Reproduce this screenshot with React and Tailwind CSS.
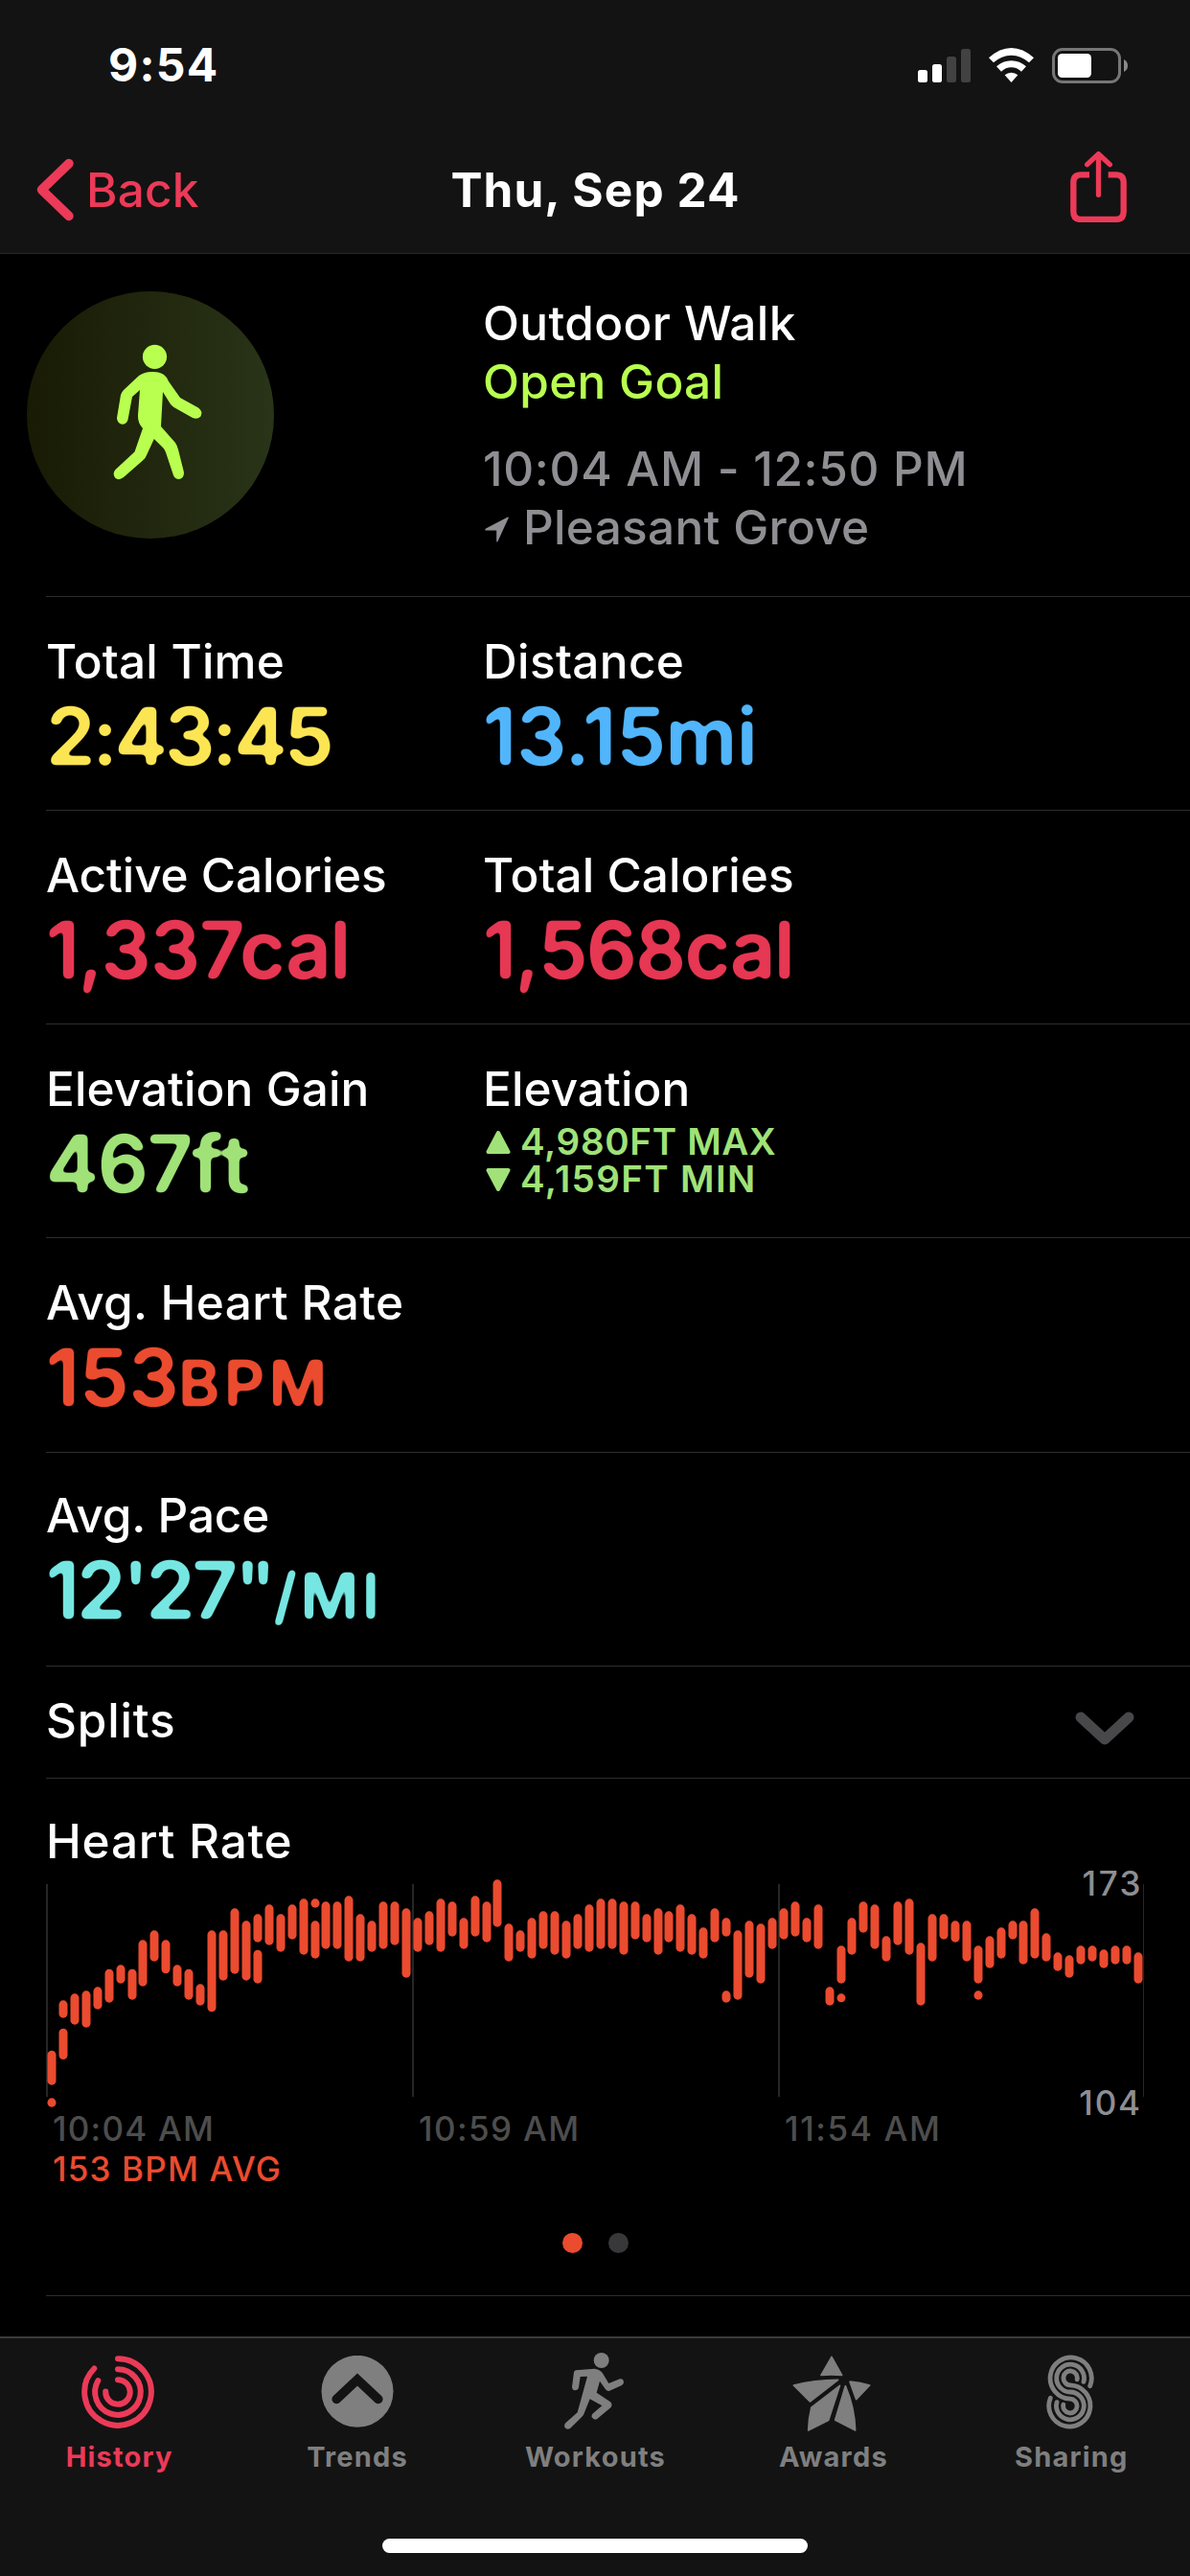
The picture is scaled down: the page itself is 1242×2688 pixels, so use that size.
import React from "react";

// Heart-rate ranges: [top, bottom] pairs on a 720-unit vertical scale, one entry per time slot.
const HEART_RATE = [
  [[539, 647], [688, 716]], [[382, 437], [470, 567]], [[361, 458]], [[352, 467]], [[340, 410]],
  [[284, 389]], [[271, 329]], [[284, 380]], [[193, 338]], [[163, 260]], [[193, 298]], [[271, 338]],
  [[284, 380]], [[331, 398]], [[163, 418]], [[163, 320]], [[94, 299]], [[133, 320]],
  [[112, 200], [224, 329]], [[82, 209]], [[112, 230]], [[82, 191]], [[64, 239]], [[64, 92], [133, 251]],
  [[73, 221]], [[73, 221]], [[55, 260]], [[112, 260]], [[133, 230]], [[73, 221]], [[73, 209]],
  [[94, 311]], [[124, 230]], [[103, 209]], [[64, 230]], [[73, 182]], [[124, 221]], [[55, 182]],
  [[73, 200]], [[4, 152]], [[142, 260]], [[163, 230]], [[124, 251]], [[103, 221]], [[103, 239]],
  [[133, 251]], [[112, 221]], [[82, 230]], [[64, 221]], [[64, 221]], [[73, 239]], [[73, 191]],
  [[112, 200]], [[94, 239]], [[103, 200]], [[82, 230]], [[112, 239]], [[154, 251]], [[94, 200]],
  [[124, 182], [352, 389]], [[163, 380]], [[133, 311]], [[142, 329]], [[124, 221]], [[94, 191]],
  [[73, 182]], [[124, 200]], [[82, 221]], [[340, 398]], [[211, 329], [361, 388]], [[124, 239]],
  [[73, 170]], [[82, 221]], [[181, 260]], [[73, 209]], [[64, 239]], [[202, 398]], [[112, 260]],
  [[112, 191]], [[133, 200]], [[133, 260]], [[211, 329], [352, 380]], [[181, 281]], [[154, 251]],
  [[133, 191]], [[133, 269]], [[94, 251]], [[172, 260]], [[232, 290]], [[241, 311]], [[211, 269]],
  [[211, 260]], [[223, 281]], [[211, 269]], [[211, 269]], [[232, 329]],
];

function RoundedFilter() {
  return (
    <svg width="0" height="0" className="absolute" aria-hidden="true">
      <filter id="rounded" x="-5%" y="-5%" width="110%" height="110%" colorInterpolationFilters="sRGB">
        <feGaussianBlur stdDeviation="2.6" />
        <feComponentTransfer>
          <feFuncA type="linear" slope="6" intercept="-2.2" />
        </feComponentTransfer>
      </filter>
    </svg>
  );
}

function StatusBar() {
  return (
    <div className="flex items-center justify-between pt-[38px] pl-[113px] pr-[65px]">
      <span className="text-[48px] font-bold leading-[60px] tracking-[1.3px]">9:54</span>
      <div className="flex items-center">
        <svg width="55" height="35" viewBox="0 0 55 35" className="mr-[19px]">
          <rect x="0" y="22" width="10" height="13" rx="2.5" fill="#fff" />
          <rect x="15" y="16" width="10" height="19" rx="2.5" fill="#fff" />
          <rect x="30" y="8" width="10" height="27" rx="2.5" fill="#424242" />
          <rect x="45" y="0" width="10" height="35" rx="2.5" fill="#424242" />
        </svg>
        <svg width="47" height="36" viewBox="276 57 141 108" fill="#fff" className="mr-[19px]">
          <path d="M276 88Q310 57 346.500 57Q383 57 417 88L402 103Q377 80 346.500 80Q316 80 291 103Z" />
          <path d="M300 115Q320 97 346.500 97Q373 97 393 115L378 131Q364 118 346.500 118Q329 118 315 131Z" />
          <path d="M326 142Q335 134 346.500 134Q358 134 367 142L346.500 165Z" />
        </svg>
        <svg width="79" height="37" viewBox="0 0 79 37">
          <rect x="1.500" y="1.500" width="69" height="34" rx="9.500" fill="none" stroke="#767676" strokeWidth="3" />
          <rect x="6" y="6" width="35" height="25" rx="4.500" fill="#fff" />
          <path d="M75 12Q79 14 79 18.500Q79 23 75 25Z" fill="#8a8a8a" />
        </svg>
      </div>
    </div>
  );
}

function NavBar() {
  return (
    <div className="grid h-[132px] mt-[34px] grid-cols-3 items-center pl-[38px] pr-[66px]">
      <div className="flex items-center text-[#ec3a58]">
        <svg width="40" height="66" viewBox="0 0 40 66" fill="none" stroke="currentColor" strokeWidth="9.500" strokeLinecap="round" strokeLinejoin="round">
          <path d="M34 5.500L5.500 33L34 60.500" />
        </svg>
        <span className="ml-[12px] text-[49.5px] font-[450] leading-[60px] tracking-[0.2px]">Back</span>
      </div>
      <h1 className="ml-[29px] whitespace-nowrap text-center text-[49.5px] font-bold leading-[60px] tracking-[1.1px]">Thu, Sep 24</h1>
      <svg width="59" height="74" viewBox="531 384 177 222" fill="none" stroke="#ec3a58" strokeLinecap="round" className="mb-[6px] justify-self-end">
        <path d="M591 457H565Q541 457 541 481V573Q541 597 565 597H674Q698 597 698 573V481Q698 457 674 457H650" strokeWidth="19" strokeLinecap="butt" />
        <path d="M619.500 394V520M584 425L619.500 392L655 425" strokeWidth="16" strokeLinejoin="round" />
      </svg>
    </div>
  );
}

function WalkBadge() {
  return (
    <div className="ml-[28px] mt-[39px] h-[258px] w-[258px] shrink-0 rounded-full bg-linear-to-r from-[#191b05] to-[#293418]">
      <svg width="258" height="258" viewBox="0 0 258 258" fill="#b8ff4f">
        <circle cx="133.500" cy="68.300" r="12.600" />
        <path d="M130 84Q138 83.500 143 87Q146 89 148 94L160 111L179 121.500Q184 125 181.500 130.500Q178 134 173 132L153.500 121Q151 119.500 149.500 117L142 105L140 141L155 158Q157 161 158 165L164 189Q164 195 159 196Q154.500 196 153 192L145 168Q144 165 142 163L132.800 154L125 171Q124 174 121 176.500L101 194Q96 198 92 194.500Q89 190 92.500 186L112.500 167.500L121 143Q115.500 137 116 129L118 103L110 110L105.500 134Q104 139 99 138.700Q94 137 94 132L98 108Q99 105 101 103L117 88Q123 84 130 84Z" />
      </svg>
    </div>
  );
}

function WorkoutSummary() {
  return (
    <section className="flex h-[357px]">
      <WalkBadge />
      <div className="ml-[218px] pt-[42px] text-[49.5px] font-medium leading-[61px]">
        <p className="tracking-[0.39px]">Outdoor Walk</p>
        <p className="tracking-[0.3px] text-[#b8ff4f]">Open Goal</p>
        <p className="mt-[30px] tracking-[0.68px] text-[#8e8e93]">10:04 AM - 12:50 PM</p>
        <p className="flex items-center tracking-[0.3px] text-[#8e8e93]">
          <svg width="25" height="27" viewBox="0 0 25 27" fill="currentColor" className="ml-[2px] mr-[15px] mt-[4px]">
            <path d="M24 .500Q25 0 24.700 1.500L13.500 26Q12.500 27.500 12.200 25.500V14.500H1Q-.500 14 1 12.500Z" />
          </svg>
          Pleasant Grove
        </p>
      </div>
    </section>
  );
}

function Stat({ label, labelClass, children }) {
  return (
    <div className="w-[456px]">
      <p className={`text-[49.5px] font-[530] leading-[60px] whitespace-nowrap ${labelClass}`}>{label}</p>
      {children}
    </div>
  );
}

function Value({ className, children }) {
  return (
    <p className={`-ml-[10px] mt-[3px] w-[440px] whitespace-nowrap pl-[10px] text-[82.5px] font-semibold leading-[90px] [filter:url(#rounded)] ${className}`}>
      {children}
    </p>
  );
}

function StatRow({ className = "h-[223px] pt-[37px]", children }) {
  return <section className={`ml-[48px] flex border-b border-[#2d2d2f] ${className}`}>{children}</section>;
}

function HeartRateChart() {
  return (
    <section className="ml-[48px] h-[540px] border-b border-[#2d2d2f] pt-[35px]">
      <h2 className="text-[49.5px] font-[530] leading-[60px] tracking-[0.75px]">Heart Rate</h2>
      <div className="relative mt-[9px] w-[1146px]">
        <svg width="1146" height="240" viewBox="0 0 1146 240" className="block">
          <g fill="#262626">
            <rect x="0" y="6" width="2" height="222" />
            <rect x="382" y="6" width="2" height="222" />
            <rect x="764" y="6" width="2" height="222" />
            <rect x="1145" y="6" width="1" height="222" />
          </g>
          <g fill="#eb4b2f">
            {HEART_RATE.map((ranges, i) =>
              ranges.map(([top, bottom]) => (
                <rect key={`${i}-${top}`} x={1.5 + Math.round(i * 11.935)} y={top / 3} width="9" height={(bottom - top) / 3} rx="4.5" />
              ))
            )}
          </g>
        </svg>
        <span className="absolute -top-[16px] right-[1px] text-[35px] font-medium leading-[42px] tracking-[2.5px] text-[#8e8e93]">173</span>
        <span className="absolute top-[213px] right-[2px] text-[35px] font-medium leading-[42px] tracking-[1.9px] text-[#8e8e93]">104</span>
      </div>
      <div className="grid grid-cols-[382px_382px_382px] text-[35px] font-medium leading-[42px] text-[#4d4d4d]">
        <span className="pl-[7px] tracking-[1.22px]">10:04 AM</span>
        <span className="pl-[7px] tracking-[1.39px]">10:59 AM</span>
        <span className="pl-[7px] tracking-[1.65px]">11:54 AM</span>
      </div>
      <p className="pl-[7px] text-[35px] font-medium leading-[42px] tracking-[1.17px] text-[#eb4b2f]">153 BPM AVG</p>
      <div className="mr-[47px] mt-[46px] flex justify-center gap-[27px]">
        <span className="h-[21px] w-[21px] rounded-full bg-[#eb4b2f]" />
        <span className="h-[21px] w-[21px] rounded-full bg-[#38383a]" />
      </div>
    </section>
  );
}

function HistoryIcon() {
  return (
    <svg width="76" height="76" viewBox="-38 -38 76 76" fill="none" stroke="currentColor" strokeWidth="6" strokeLinecap="round">
      <path d="M0 -34.800A34.800 34.800 0 1 1 -24.700 -24.500" />
      <path d="M0 -23.800A23.800 23.800 0 1 1 -20.700 -11.800" />
      <path d="M0 -12.800A12.800 12.800 0 1 1 -12.800 -.5" />
    </svg>
  );
}

function TrendsIcon() {
  return (
    <svg width="76" height="76" viewBox="-38 -37.300 76 76" fill="none" className="ml-[2px]">
      <circle r="37.500" fill="currentColor" />
      <path d="M-21.800 8.200L0 -12.200L21.800 8.200" stroke="#131313" strokeWidth="9.600" strokeLinecap="round" />
    </svg>
  );
}

function RunIcon() {
  return (
    <svg width="62" height="81" viewBox="56 45 186 243" fill="currentColor" className="mb-[2px]">
      <circle cx="172" cy="69" r="24" />
      <path d="M92 100L150 95Q165 96 175 108L195 141L230 127Q241 126 242 137Q242 143 236 147L196 165Q190 166 185 160L167 134L157 170L200 199Q208 206 202 216L158 253Q148 257 142 247Q140 240 146 235L174 211L136 190L118 235Q116 242 110 247L74 282Q64 288 57 278Q55 270 60 265L97 232L128 119L106 120L101 154Q99 163 89 163Q80 161 80 152L86 106Q87 101 92 100Z" />
    </svg>
  );
}

function AwardsIcon() {
  return (
    <svg width="82" height="80" viewBox="771 53 246 240" fill="currentColor" stroke="currentColor" strokeWidth="5" strokeLinejoin="round" className="mt-[4px]">
      <path d="M894 57L861 114.500Q893 111 926 114.500Z" />
      <path d="M775 146Q840 129.500 914 129L826 197Z" />
      <path d="M919.500 147L830.500 215.500Q822 250 821 287L884 255.500Z" />
      <path d="M937 148L905 255L968 287Q966 215 937 148Z" />
      <path d="M951 134.500Q985 138 1013 146L971 190Z" />
    </svg>
  );
}

function SharingIcon() {
  return (
    <svg width="52" height="80" viewBox="-26 -40 52 80" fill="none" stroke="currentColor" strokeWidth="4.800" strokeLinecap="round">
      <path d="M7.200 -13.200A7.200 7.400 0 1 0 0 -7.200A21.600 21.600 0 1 1 -20.700 6.300" />
      <path d="M14 -10.600A14.400 14.400 0 1 0 0 0A14.400 14.400 0 1 1 -14 10.600" />
      <path d="M20.700 -6.300A21.600 21.600 0 1 0 0 7.200A7.200 7.400 0 1 1 -7.200 13.200" />
    </svg>
  );
}

const TABS = [
  { label: "History", Icon: HistoryIcon, color: "text-[#ec3a58]" },
  { label: "Trends", Icon: TrendsIcon, color: "text-[#7f7f7f]" },
  { label: "Workouts", Icon: RunIcon, color: "text-[#7f7f7f]" },
  { label: "Awards", Icon: AwardsIcon, color: "text-[#7f7f7f]" },
  { label: "Sharing", Icon: SharingIcon, color: "text-[#7f7f7f]" },
];

function TabBar() {
  return (
    <footer className="mt-auto flex h-[250px] flex-col items-center border-t-2 border-[#3a3a3a] bg-[#131313]">
      <nav className="grid w-full grid-cols-5 pt-[12px]">
        {TABS.map(({ label, Icon, color }) => (
          <div key={label} className={`flex flex-col items-center ${color}`}>
            <div className="mr-[2px] flex h-[88px] items-center justify-center">
              <Icon />
            </div>
            <span className="mt-[6px] ml-px text-[29px] font-bold leading-[36px] tracking-[1.2px]">{label}</span>
          </div>
        ))}
      </nav>
      <div className="mb-[24px] mt-auto h-[15px] w-[444px] rounded-full bg-white" />
    </footer>
  );
}

export default function App() {
  return (
    <div className="flex h-[2688px] w-[1242px] flex-col overflow-hidden bg-black font-['Inter',sans-serif] text-white">
      <RoundedFilter />
      <header className="h-[265px] border-b border-[#272727] bg-[#131313]">
        <StatusBar />
        <NavBar />
      </header>
      <main>
        <WorkoutSummary />
        <div className="ml-[48px] h-px bg-[#2d2d2f]" />
        <StatRow>
          <Stat label="Total Time" labelClass="tracking-[0.2px]">
            <Value className="tracking-[-2.98px] text-[#fce553]">2:43:45</Value>
          </Stat>
          <Stat label="Distance" labelClass="tracking-[0.35px]">
            <Value className="tracking-[-0.1px] text-[#51b5fb]">13.15mi</Value>
          </Stat>
        </StatRow>
        <StatRow>
          <Stat label="Active Calories" labelClass="tracking-[-0.1px]">
            <Value className="tracking-[-1.03px] text-[#e63753]">1,337cal</Value>
          </Stat>
          <Stat label="Total Calories" labelClass="tracking-[0.05px]">
            <Value className="tracking-[-1.45px] text-[#e63753]">1,568cal</Value>
          </Stat>
        </StatRow>
        <StatRow>
          <Stat label="Elevation Gain" labelClass="tracking-[0.08px]">
            <Value className="tracking-[-1px] text-[#a0e278]">
              467<span className="tracking-[2.6px]">ft</span>
            </Value>
          </Stat>
          <Stat label="Elevation" labelClass="tracking-[0.06px]">
            <div className="mt-[6px] text-[38.5px] font-semibold leading-[39px] text-[#a0e278]">
              <p className="flex items-center gap-[10px] pl-[3px] tracking-[0.69px]">
                <svg width="26" height="26" viewBox="0 0 26 26" fill="currentColor" stroke="currentColor" strokeWidth="4" strokeLinejoin="round">
                  <path d="M13 3L23.500 23H2.500Z" />
                </svg>
                4,980FT MAX
              </p>
              <p className="flex items-center gap-[10px] pl-[3px] tracking-[1.38px]">
                <svg width="26" height="26" viewBox="0 0 26 26" fill="currentColor" stroke="currentColor" strokeWidth="4" strokeLinejoin="round">
                  <path d="M13 23L23.500 3H2.500Z" />
                </svg>
                4,159FT MIN
              </p>
            </div>
          </Stat>
        </StatRow>
        <StatRow className="h-[224px] pt-[37px]">
          <Stat label="Avg. Heart Rate" labelClass="tracking-[0.4px]">
            <Value className="tracking-[-0.4px] text-[#eb4b2f]">
              153<span className="text-[66px] tracking-[4.2px]">BPM</span>
            </Value>
          </Stat>
        </StatRow>
        <StatRow className="h-[223px] pt-[35px]">
          <Stat label="Avg. Pace" labelClass="tracking-[-0.2px]">
            <Value className="tracking-[-3px] text-[#76e6e2]">
              12'27"<span className="text-[66px] tracking-[3.3px]">/MI</span>
            </Value>
          </Stat>
        </StatRow>
        <section className="ml-[48px] flex h-[117px] justify-between border-b border-[#2d2d2f] pr-[58px] pt-[26px]">
          <h2 className="text-[49.5px] font-[530] leading-[60px] tracking-[0.8px]">Splits</h2>
          <svg width="62" height="36" viewBox="0 0 62 36" fill="none" stroke="#48484a" strokeWidth="11" strokeLinecap="round" strokeLinejoin="round" className="mt-[21px]">
            <path d="M6 6L31 29L56 6" />
          </svg>
        </section>
        <HeartRateChart />
      </main>
      <TabBar />
    </div>
  );
}
